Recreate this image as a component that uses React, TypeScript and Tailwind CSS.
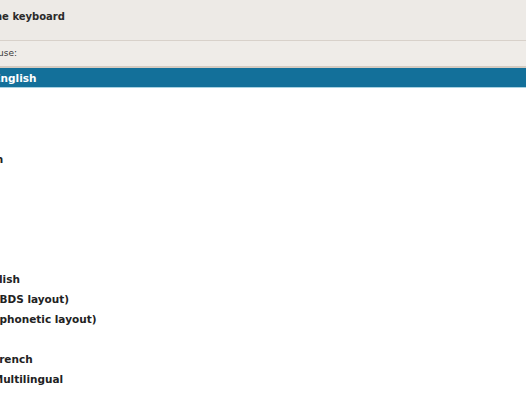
const keymaps = [
  'American English',
  'Albanian',
  'Arabic',
  'Asturian',
  'Bangladesh',
  'Belarusian',
  'Bengali',
  'Belgian',
  'Bosnian',
  'Brazilian',
  'British English',
  'Bulgarian (BDS layout)',
  'Bulgarian (phonetic layout)',
  'Burmese',
  'Canadian French',
  'Canadian Multilingual',
  'Catalan',
];

export default function App() {
  const selected = 0;

  return (
    <main className="flex flex-col w-[526px] h-[394px] overflow-hidden bg-white font-['DejaVu_Sans',sans-serif]">
      <div className="flex items-center h-[41px] shrink-0 bg-[#edeae6] border-b border-[#d8d1ca] pb-[7px]">
        <span className="ml-[-68px] whitespace-nowrap text-[10px] font-bold text-[#2a2a2a]">
          Configure the keyboard
        </span>
      </div>

      <div className="flex items-center h-[27px] shrink-0 bg-[#efece8] border-b-2 border-[#d4cbc1]">
        <span className="ml-[-53px] whitespace-nowrap text-[9px] text-[#3a3a3a]">
          Keymap to use:
        </span>
      </div>

      <ul className="flex flex-col">
        {keymaps.map((name, i) => (
          <li
            key={name}
            className={
              i === selected
                ? 'flex items-center h-[20px] shrink-0 pt-[3px] bg-[#13709a] border-b border-[#a8d2e2] text-white'
                : 'flex items-center h-[20px] shrink-0 pt-[4px] text-[#222]'
            }
          >
            <span className="ml-[-66px] whitespace-nowrap text-[10.5px] font-bold">{name}</span>
          </li>
        ))}
      </ul>
    </main>
  );
}
